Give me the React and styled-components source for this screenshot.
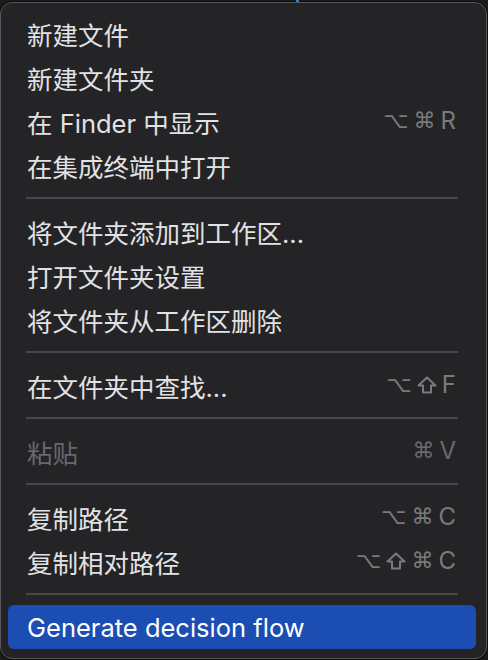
import React from 'react'
import styled, { createGlobalStyle } from 'styled-components'

const GlobalStyle = createGlobalStyle`
	html, body {
		margin: 0;
		padding: 0;
		background: #1b1b1d;
		width: 488px;
		height: 660px;
		overflow: hidden;
	}
	* {
		box-sizing: border-box;
	}
`

const Page = styled.div`
	position: relative;
	width: 488px;
	height: 660px;
	padding-top: 2px;
`

const CursorDot = styled.span`
	position: absolute;
	left: 296px;
	top: 0;
	width: 3px;
	height: 2px;
	background: #2b7fe0;
`

const Menu = styled.div`
	width: 487px;
	height: 657px;
	background: #242427;
	border: 1px solid #58585b;
	border-radius: 12px;
	box-shadow: 0 0 0 1px #0c0c0d;
	padding: 8px 10px 8px 7px;
	display: flex;
	flex-direction: column;
	font-family: Inter, 'Noto Sans CJK SC', sans-serif;
`

const Item = styled.div`
	height: 44px;
	flex-shrink: 0;
	display: flex;
	align-items: center;
	justify-content: space-between;
	padding: 0 20px 0 19px;
	border-radius: 6px;
	font-size: 25.5px;
	color: ${p => (p.disabled ? '#68686b' : p.active ? '#ffffff' : '#e2e2e4')};
	background: ${p => (p.active ? '#1b4db3' : 'transparent')};
`

const Label = styled.span`
	white-space: nowrap;
`

const Shortcut = styled.span`
	display: flex;
	align-items: center;
	gap: 5px;
	color: ${p => (p.disabled ? '#6a6a6d' : '#7b7b7e')};
`

const Key = styled.span`
	font-family: ${p => (p.letter ? 'Inter, sans-serif' : "'DejaVu Sans', sans-serif")};
	font-size: ${p => (p.letter ? '24px' : '22px')};
	line-height: 1;
`

const ShiftIcon = styled.svg`
	width: 20px;
	height: 18px;
	display: block;
`

const Separator = styled.div`
	height: 22px;
	flex-shrink: 0;
	display: flex;
	align-items: center;
	padding: 0 18px;
	&::after {
		content: '';
		flex: 1;
		height: 2px;
		background: #48484b;
	}
`

const groups = [
	[
		{ label: '新建文件' },
		{ label: '新建文件夹' },
		{ label: '在 Finder 中显示', keys: ['⌥', '⌘', 'R'] },
		{ label: '在集成终端中打开' }
	],
	[
		{ label: '将文件夹添加到工作区...' },
		{ label: '打开文件夹设置' },
		{ label: '将文件夹从工作区删除' }
	],
	[{ label: '在文件夹中查找...', keys: ['⌥', 'shift', 'F'] }],
	[{ label: '粘贴', keys: ['⌘', 'V'], disabled: true }],
	[
		{ label: '复制路径', keys: ['⌥', '⌘', 'C'] },
		{ label: '复制相对路径', keys: ['⌥', 'shift', '⌘', 'C'] }
	],
	[{ label: 'Generate decision flow', active: true }]
]

const Shift = () => (
	<ShiftIcon viewBox="0 0 20 18">
		<path
			d="M10 1.5 L18.5 9.5 H14 V16.5 H6 V9.5 H1.5 Z"
			fill="none"
			stroke="currentColor"
			strokeWidth="2"
			strokeLinejoin="round"
		/>
	</ShiftIcon>
)

const App = () => {
	return (
		<>
			<GlobalStyle />
			<Page>
				<CursorDot />
				<Menu>
					{groups.map((group, gi) => (
						<React.Fragment key={gi}>
							{gi > 0 && <Separator />}
							{group.map(item => (
								<Item key={item.label} disabled={item.disabled} active={item.active}>
									<Label>{item.label}</Label>
									{item.keys && (
										<Shortcut disabled={item.disabled}>
											{item.keys.map((k, i) =>
												k === 'shift' ? (
													<Shift key={i} />
												) : (
													<Key key={i} letter={/[A-Z]/.test(k)}>
														{k}
													</Key>
												)
											)}
										</Shortcut>
									)}
								</Item>
							))}
						</React.Fragment>
					))}
				</Menu>
			</Page>
		</>
	)
}

export default App
